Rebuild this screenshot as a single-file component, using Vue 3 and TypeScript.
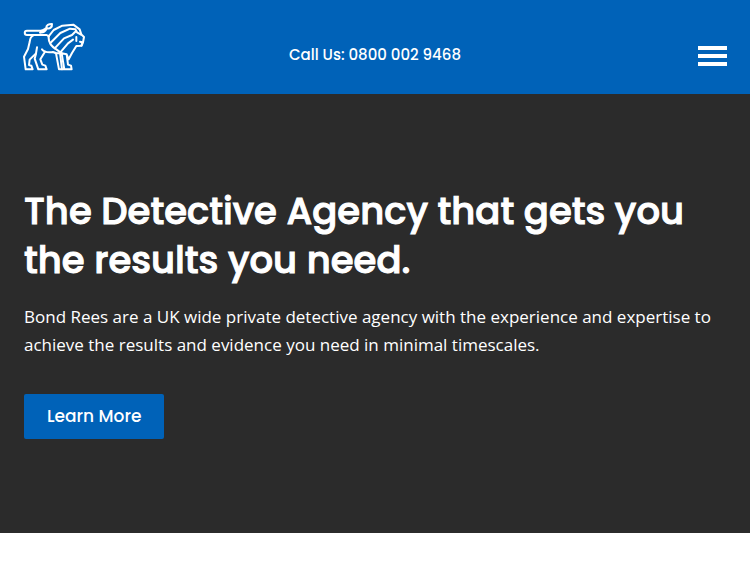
<script setup lang="ts">
const phone: string = '0800 002 9468'
const phoneHref = `tel:${phone.replace(/\s/g, '')}`
</script>

<template>
  <header class="header">
    <a class="logo" href="#" aria-label="Bond Rees home">
      <svg viewBox="27 30 186 144" width="62" height="48" aria-hidden="true">
        <path d="M105 70 98 66H39C30 66 30 53 39 53H79C90 53 92 47 97 45M97 45C96 36 104 33 114 33C115 42 108 49 97 45ZM97 49C91 60 83 58 78 59" />
        <path d="M57 68C49 71 48 78 47 87L42 108 30 131 35 169H56L52 158 45 156 47 140 66 121 69 103" />
        <path d="M66 122 62 137 73 169H98L94 158 85 155 79 139 93 116" />
        <path d="M84 109C92 119 104 119 117 117L126 121 135 169H144L138 120M117 117 124 119" />
        <path d="M144 169H173L171 158 162 155 158 124M143 121 151 169M126 121 143 121 158 124 164 139 174 120 187 99 202 98 205 88 198 86" />
        <path d="M104 68C102 86 113 101 127 109L143 121M104 70 119 51 145 38 178 35 197 49 202 64 210 72 207 88 203 98" />
        <path d="M109 90 139 60 168 47 184 49M122 106 150 76 174 66 183 57M139 118 162 91 177 80M187 84 187 72M184 49 189 58 201 65" />
      </svg>
    </a>
    <a class="phone" :href="phoneHref">Call Us: {{ phone }}</a>
    <button class="menu" type="button" aria-label="Open menu">
      <span></span><span></span><span></span>
    </button>
  </header>
  <main class="hero">
    <h1>The Detective Agency that gets you the results you need.</h1>
    <p>Bond Rees are a UK wide private detective agency with the experience and expertise to achieve the results and evidence you need in minimal timescales.</p>
    <a class="cta" href="#">Learn More</a>
  </main>
</template>

<style>
body {
  margin: 0;
  background: #fff;
}
</style>

<style scoped>
.header {
  display: grid;
  grid-template-columns: 1fr auto 1fr;
  align-items: center;
  box-sizing: border-box;
  min-height: 94px;
  padding: 0 23px;
  background: #0062b8;
}
.logo,
.logo svg {
  display: block;
  justify-self: start;
}
.logo path {
  fill: none;
  stroke: #fff;
  stroke-width: 6;
  stroke-linejoin: round;
  stroke-linecap: round;
}
.phone {
  padding-top: 15px;
  color: #fff;
  font: 500 15px/24px Poppins, Inter, sans-serif;
  text-decoration: none;
}
.menu {
  display: grid;
  gap: 4px;
  justify-self: end;
  width: 29px;
  margin-top: 17px;
  padding: 0;
  border: 0;
  background: none;
  cursor: pointer;
}
.menu span {
  height: 4px;
  background: #fff;
}
.hero {
  padding: 93px 24px 94px;
  background: #2b2b2b;
  color: #fff;
}
h1 {
  margin: 0 0 18px;
  font: 500 37px/49px Poppins, Inter, sans-serif;
  -webkit-text-stroke: 1px #fff;
}
p {
  margin: 0 0 35px;
  font: 400 17px/28px "Open Sans", sans-serif;
}
.cta {
  display: inline-block;
  padding: 9px 23px;
  border-radius: 2px;
  background: #0062b8;
  color: #fff;
  font: 500 17px/27px Poppins, Inter, sans-serif;
  text-decoration: none;
}
</style>
